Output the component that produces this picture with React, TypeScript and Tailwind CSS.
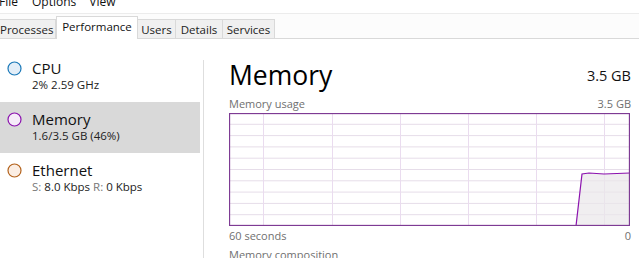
import React from "react";

const FONT = { fontFamily: '"Open Sans", "Noto Sans", sans-serif' };

function Circle({ border, fill }: { border: string; fill: string }) {
  return (
    <svg width="15" height="15" viewBox="0 0 15 15" className="shrink-0">
      <circle cx="7.5" cy="7.5" r="6.5" fill={fill} stroke={border} strokeWidth="1.2" />
    </svg>
  );
}

function SideItem({
  title,
  sub,
  border,
  fill,
  active,
}: {
  title: string;
  sub: React.ReactNode;
  border: string;
  fill: string;
  active?: boolean;
}) {
  return (
    <div className={`flex h-[51px] gap-[10px] pl-[7px] pt-[8px] ${active ? "bg-[#d9d9d9]" : ""}`}>
      <div className="pt-[2px]">
        <Circle border={border} fill={fill} />
      </div>
      <div className="flex flex-col">
        <span className="text-[15px] leading-[18px] text-[#111]">{title}</span>
        <span className="text-[11.5px] leading-[16px] text-[#222]">{sub}</span>
      </div>
    </div>
  );
}

function Graph() {
  const w = 401;
  const h = 113;
  const vlines = [34, 103, 171, 239, 307, 375];
  const hlines = Array.from({ length: 9 }, (_, i) => ((i + 1) * h) / 10);
  const pts = "347,113 353,61 360,60 375,61 401,60";
  return (
    <svg width={w} height={h} viewBox={`0 0 ${w} ${h}`} className="block shrink-0">
      <rect x="0" y="0" width={w} height={h} fill="#ffffff" />
      {hlines.map((y) => (
        <line key={y} x1="0" x2={w} y1={y} y2={y} stroke="#e6dde9" strokeWidth="1" />
      ))}
      {vlines.map((x) => (
        <line key={x} x1={x + 0.5} x2={x + 0.5} y1="0" y2={h} stroke="#eadcef" strokeWidth="1" />
      ))}
      <polygon points={`${pts} 401,113`} fill="#e9e7ea" fillOpacity="0.7" />
      <polyline points={pts} fill="none" stroke="#8b12ae" strokeWidth="1.2" />
      <rect x="0.5" y="0.5" width={w - 1} height={h - 1} fill="none" stroke="#7e3b94" strokeWidth="1.3" />
    </svg>
  );
}

const TABS: { label: string; w: string }[] = [
  { label: "Processes", w: "w-[56px]" },
  { label: "Performance", w: "w-[82px]" },
  { label: "Users", w: "w-[38px]" },
  { label: "Details", w: "w-[47px]" },
  { label: "Services", w: "w-[52px]" },
];

export default function App() {
  return (
    <div className="w-[639px] h-[258px] overflow-hidden bg-white" style={FONT}>
      {/* Menu bar (cut off at top) */}
      <div className="h-[13px] overflow-hidden">
        <div className="flex text-[12px] leading-[16px] text-[#111] -mt-[6px]">
          <span className="ml-[-1px]">File</span>
          <span className="ml-[14px]">Options</span>
          <span className="ml-[13px]">View</span>
        </div>
      </div>

      {/* Tabs */}
      <div className="h-[26px] border-t border-[#ececec] bg-[#fcfcfc] border-b border-b-[#d9d9d9] flex items-end">
        {TABS.map(({ label, w }) => {
          const active = label === "Performance";
          return active ? (
            <div
              key={label}
              className={`${w} h-[23px] -mb-px bg-white border border-b-0 border-[#d9d9d9] text-center text-[11.5px] leading-[20px] text-[#111]`}
            >
              {label}
            </div>
          ) : (
            <div
              key={label}
              className={`${w} h-[19px] bg-[#f0f0f0] border-t border-r border-[#d9d9d9] text-center text-[11.5px] leading-[20px] text-[#222] first:text-left`}
            >
              {label}
            </div>
          );
        })}
      </div>

      <div className="flex h-[219px]">
        {/* Sidebar */}
        <div className="w-[203px] shrink-0">
          <div className="w-[200px] pt-[12px]">
            <SideItem title="CPU" sub="2% 2.59 GHz" border="#1a78b8" fill="#e3eef8" />
            <SideItem title="Memory" sub="1.6/3.5 GB (46%)" border="#8b12ae" fill="#f6ecf9" active />
            <SideItem
              title="Ethernet"
              sub={
                <>
                  <span className="text-[#777]">S:</span> 8.0 Kbps <span className="text-[#777]">R:</span> 0 Kbps
                </>
              }
              border="#b3621c"
              fill="#fbeee4"
            />
          </div>
        </div>
        <div className="w-px bg-[#dedede] mt-[21px] shrink-0" />

        {/* Main panel */}
        <div className="flex-1 min-w-0 pl-[25px] pr-[8px] flex flex-col overflow-hidden">
          <div className="shrink-0 flex items-end justify-between h-[53px]">
            <span className="text-[26.5px] leading-[34px] text-black">Memory</span>
            <span className="text-[14.5px] leading-[20px] text-[#111] mb-[6px]">3.5 GB</span>
          </div>
          <div className="shrink-0 flex justify-between text-[11px] leading-[14px] text-[#707070] mt-[5px] mb-[2px]">
            <span>Memory usage</span>
            <span>3.5 GB</span>
          </div>
          <Graph />
          <div className="shrink-0 flex justify-between text-[11px] leading-[14px] text-[#707070] mt-[3px]">
            <span>60 seconds</span>
            <span>0</span>
          </div>
          <div className="shrink-0 text-[11px] leading-[14px] text-[#707070] mt-[5px]">Memory composition</div>
        </div>
      </div>
    </div>
  );
}
